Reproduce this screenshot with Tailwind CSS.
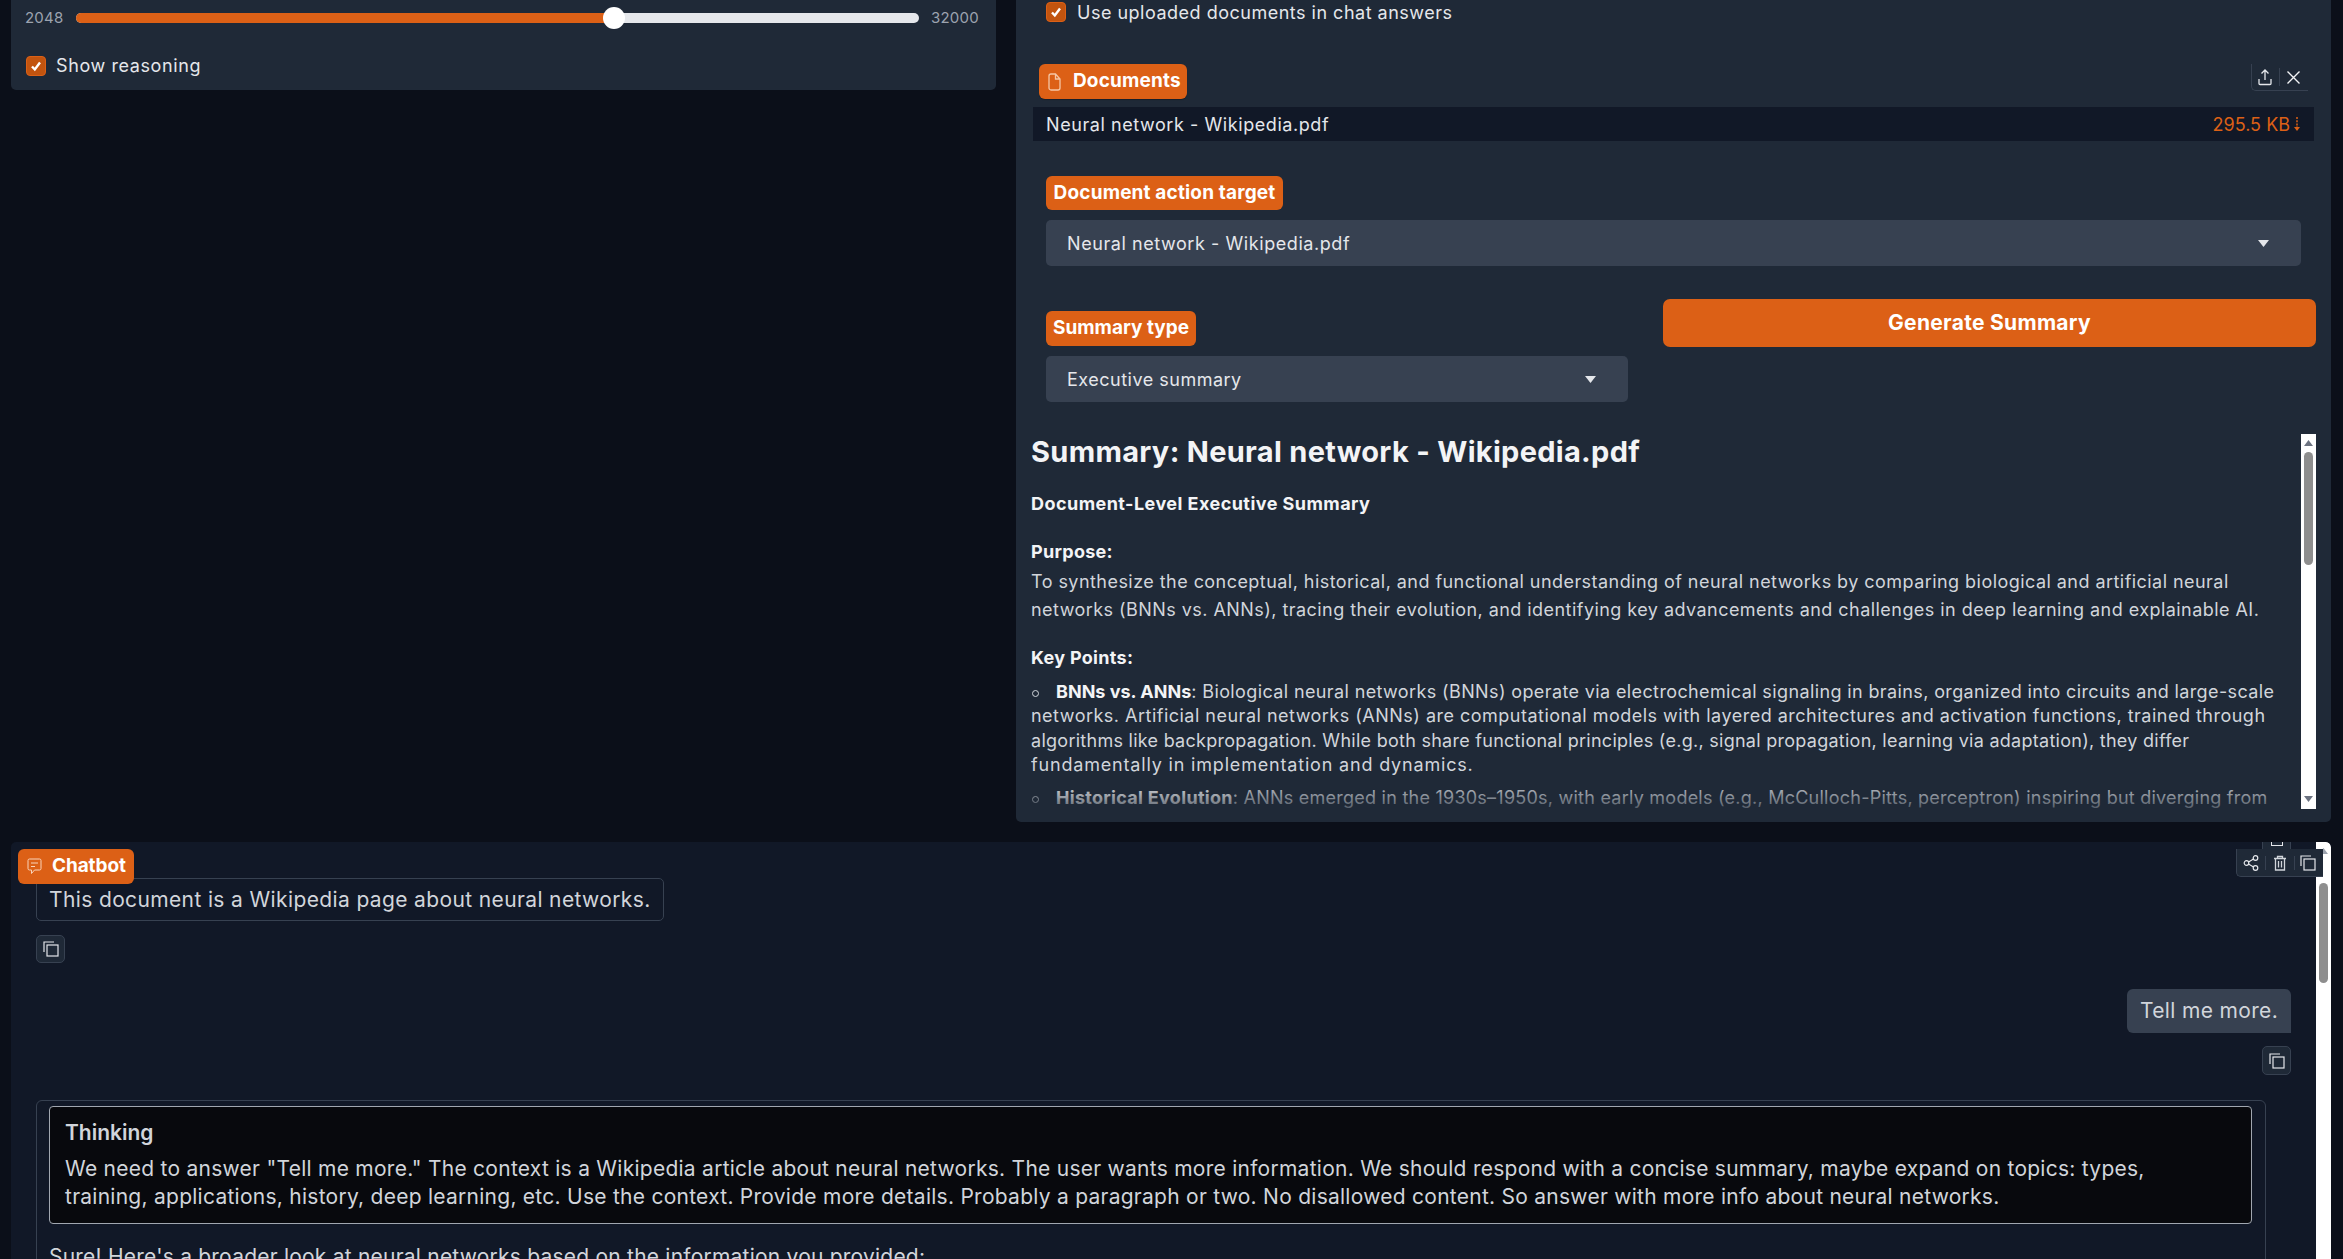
<!DOCTYPE html>
<html lang="en">
<head>
<meta charset="utf-8">
<title>Document chat</title>
<script src="https://cdn.jsdelivr.net/npm/@tailwindcss/browser@4"></script>
</head>
<body class="bg-[#0b0f19] font-['Inter',sans-serif] text-[#e5e7eb] h-[1259px] w-[2343px] overflow-hidden">
<div class="flex items-start pl-[11px] h-[842px]">
  <!-- left panel -->
  <section class="w-[985px] h-[90px] bg-[#1f2937] rounded-b-[5px] shrink-0">
    <div class="flex items-center h-[36px] pl-[14px]">
      <span class="w-[39px] text-[15px] text-[#9ca3af] tracking-[0.2px]">2048</span>
      <div class="relative ml-[12px] w-[843px] h-[10px] rounded-full bg-[#e5e7eb]">
        <div class="w-[537px] h-[10px] rounded-l-full bg-[#dc6016]"></div>
        <div class="absolute left-[527px] top-[-6px] w-[22px] h-[22px] rounded-full bg-white"></div>
      </div>
      <span class="ml-[12px] text-[15px] text-[#9ca3af] tracking-[0.2px]">32000</span>
    </div>
    <div class="flex items-center gap-[10px] mt-[20px] ml-[15px] h-[20px]">
      <span class="flex items-center justify-center w-[20px] h-[20px] rounded-[4px] bg-[#c2540f] border border-[#dc6016]">
        <svg width="14" height="14" viewBox="0 0 14 14" fill="none" stroke="#fff" stroke-width="2.4"><path d="M3 7.5l2.8 3L11 3.5"/></svg>
      </span>
      <span class="mb-[2px] text-[18px] text-[#e5e7eb] tracking-[0.6px]">Show reasoning</span>
    </div>
  </section>

  <!-- right panel -->
  <section class="ml-[20px] w-[1315px] h-[822px] bg-[#1f2937] rounded-b-[5px] shrink-0 overflow-hidden">
    <div class="flex items-center gap-[11px] ml-[30px] mt-[2px] h-[20px]">
      <span class="flex items-center justify-center w-[20px] h-[20px] rounded-[4px] bg-[#c2540f] border border-[#dc6016]">
        <svg width="14" height="14" viewBox="0 0 14 14" fill="none" stroke="#fff" stroke-width="2.4"><path d="M3 7.5l2.8 3L11 3.5"/></svg>
      </span>
      <span class="text-[18px] text-[#e5e7eb] tracking-[0.5px]">Use uploaded documents in chat answers</span>
    </div>

    <div class="ml-[17px] mt-[42px] w-[1281px]">
      <div class="flex items-start justify-between h-[43px]">
        <div class="ml-[6px] flex items-center w-[148px] h-[35px] rounded-[6px] bg-[#dc6016] pl-[9px] shadow-[0_1px_1px_rgba(0,0,0,0.25)]">
          <svg width="13" height="18" viewBox="0 0 13 18" fill="none" stroke="#f5c6a5" stroke-width="1.3"><path d="M1 3a2 2 0 0 1 2-2h4.500L12 6v9a2 2 0 0 1-2 2H3a2 2 0 0 1-2-2zM7.500 1v5H12"/></svg>
          <span class="ml-[12px] text-[19px] font-bold text-white tracking-[0.15px]">Documents</span>
        </div>
        <div class="flex items-center mr-[6px] w-[57px] h-[27px] border-l border-b border-[#374151] rounded-bl-[5px] pl-[5px]">
          <svg width="16" height="18" viewBox="0 0 16 18" fill="none" stroke="#e5e7eb" stroke-width="1.3"><path d="M8 12V2M4.500 5.500L8 2l3.500 3.500M2 11v4.500a1 1 0 0 0 1 1h10a1 1 0 0 0 1-1V11"/></svg>
          <span class="ml-[6px] mr-[6px] w-px h-[18px] bg-[#374151]"></span>
          <svg width="15" height="15" viewBox="0 0 15 15" fill="none" stroke="#f3f4f6" stroke-width="1.4"><path d="M1.500 1.500l12 12M13.500 1.500l-12 12"/></svg>
        </div>
      </div>
      <div class="flex items-center justify-between h-[34px] bg-[#111827] pl-[13px] pr-[13px]">
        <span class="text-[18px] text-[#e5e7eb] tracking-[0.57px]">Neural network - Wikipedia.pdf</span>
        <span class="flex items-center text-[18px] text-[#dc6016]">295.5 KB
          <svg class="ml-[3px]" width="8" height="15" viewBox="0 0 8 15" fill="none" stroke="#dc6016" stroke-width="1.5"><path d="M4 0v11" stroke-dasharray="2 1.2"/><path d="M1 10h6l-3 4z" fill="#dc6016" stroke="none"/></svg>
        </span>
      </div>
    </div>

    <div class="ml-[30px] mt-[35px] flex items-center justify-center w-[237px] h-[34px] rounded-[6px] bg-[#dc6016] text-[19px] font-bold text-white whitespace-nowrap tracking-[0.16px]">Document action target</div>
    <div class="ml-[30px] mt-[10px] w-[1255px] h-[46px] flex items-center justify-between rounded-[5px] bg-[#374151] pl-[21px] pr-[32px]">
      <span class="text-[18px] text-[#e5e7eb] tracking-[0.57px]">Neural network - Wikipedia.pdf</span>
      <svg width="11" height="7" viewBox="0 0 11 7"><path d="M0 0h11L5.500 7z" fill="#e5e7eb"/></svg>
    </div>

    <div class="flex items-start mt-[33px]">
      <div class="ml-[30px] w-[582px] pt-[12px]">
        <div class="flex items-center justify-center w-[150px] h-[35px] rounded-[6px] bg-[#dc6016] text-[19px] font-bold text-white">Summary type</div>
        <div class="mt-[10px] h-[46px] flex items-center justify-between rounded-[5px] bg-[#374151] pl-[21px] pr-[32px]">
          <span class="text-[18px] text-[#e5e7eb] tracking-[0.5px]">Executive summary</span>
          <svg width="11" height="7" viewBox="0 0 11 7"><path d="M0 0h11L5.500 7z" fill="#e5e7eb"/></svg>
        </div>
      </div>
      <button class="ml-[35px] w-[653px] h-[48px] rounded-[7px] bg-[#dc6016] text-[21px] font-bold text-white tracking-[0.3px]">Generate Summary</button>
    </div>

    <div class="relative ml-[15px] mt-[32px] w-[1285px] h-[375px] overflow-hidden">
      <div class="w-[1270px] whitespace-nowrap text-[18px] text-[#d1d5db]">
        <h2 class="text-[29px] leading-[36px] font-bold text-[#f3f4f6] tracking-[0.3px]">Summary: Neural network - Wikipedia.pdf</h2>
        <p class="mt-[22px] h-[24px] leading-[24px] font-bold text-[#f3f4f6] tracking-[0.45px]">Document-Level Executive Summary</p>
        <p class="mt-[24px] h-[24px] leading-[24px] font-bold text-[#f3f4f6] tracking-[0.3px]">Purpose:</p>
        <p class="mt-[4px] leading-[28px] tracking-[0.45px]">To synthesize the conceptual, historical, and functional understanding of neural networks by comparing biological and artificial neural<br>networks (BNNs vs. ANNs), tracing their evolution, and identifying key advancements and challenges in deep learning and explainable AI.</p>
        <p class="mt-[22px] h-[24px] leading-[24px] font-bold text-[#f3f4f6] tracking-[0.3px]">Key Points:</p>
        <ul class="mt-[10px] leading-[24.4px]">
          <li><span class="inline-block w-[7px] h-[7px] ml-[1px] mr-[17px] mb-[1px] rounded-full border border-[#d1d5db]"></span><b class="font-bold text-[#f3f4f6]">BNNs vs. ANNs</b><span class="tracking-[0.38px]">: Biological neural networks (BNNs) operate via electrochemical signaling in brains, organized into circuits and large-scale</span><br><span class="tracking-[0.49px]">networks. Artificial neural networks (ANNs) are computational models with layered architectures and activation functions, trained through</span><br><span class="tracking-[0.27px]">algorithms like backpropagation. While both share functional principles (e.g., signal propagation, learning via adaptation), they differ</span><br><span class="tracking-[0.82px]">fundamentally in implementation and dynamics.</span></li>
          <li class="mt-[8px]"><span class="inline-block w-[7px] h-[7px] ml-[1px] mr-[17px] mb-[1px] rounded-full border border-[#d1d5db]"></span><b class="font-bold text-[#f3f4f6] tracking-[0.3px]">Historical Evolution</b><span class="tracking-[0.24px]">: ANNs emerged in the 1930s–1950s, with early models (e.g., McCulloch-Pitts, perceptron) inspiring but diverging from</span></li>
        </ul>
      </div>
      <div class="absolute left-0 bottom-0 w-[1270px] h-[30px] bg-gradient-to-b from-transparent to-[#1f2937]/70"></div>
      <div class="absolute right-0 top-0 w-[15px] h-[375px] bg-white">
        <svg class="absolute left-[3px] top-[6px]" width="9" height="6" viewBox="0 0 9 6"><path d="M4.500 0L9 6H0z" fill="#6b7280"/></svg>
        <div class="absolute left-[3px] top-[18px] w-[9px] h-[113px] rounded-full bg-[#8e8e8e]"></div>
        <svg class="absolute left-[3px] bottom-[7px]" width="9" height="6" viewBox="0 0 9 6"><path d="M0 0h9L4.500 6z" fill="#6b7280"/></svg>
      </div>
    </div>
  </section>
</div>

<!-- chatbot -->
<section class="relative ml-[11px] w-[2320px] h-[417px] bg-[#111827] rounded-t-[5px] overflow-hidden">
  <div class="absolute left-[7px] top-[7px] z-10 flex items-center w-[116px] h-[35px] rounded-[6px] bg-[#dc6016] pl-[9px]">
    <svg width="15" height="17" viewBox="0 0 15 17" fill="none" stroke="#f8d3ba" stroke-width="1"><path d="M2.500 1h10A1.500 1.500 0 0 1 14 2.500v8a1.500 1.500 0 0 1-1.500 1.500H7.500L4.500 15.500V12h-2A1.500 1.500 0 0 1 1 10.500v-8A1.500 1.500 0 0 1 2.500 1zM4 5h7M4 8.500h4"/></svg>
    <span class="ml-[10px] text-[19px] font-bold text-white tracking-[-0.1px]">Chatbot</span>
  </div>

  <div class="absolute right-[8px] top-[7px] z-10 flex items-center w-[87px] h-[28px] bg-[#1f2937] rounded-bl-[5px] border-l border-b border-[#374151] pl-[6px]">
    <svg width="16" height="16" viewBox="0 0 16 16" fill="none" stroke="#e5e7eb" stroke-width="1.2"><circle cx="3.500" cy="8" r="2.300"/><circle cx="12.500" cy="3" r="2.300"/><circle cx="12.500" cy="13" r="2.300"/><path d="M5.500 6.900l5-2.800M5.500 9.100l5 2.800"/></svg>
    <span class="ml-[6px] mr-[7px] w-px h-[14px] bg-[#374151]"></span>
    <svg width="14" height="16" viewBox="0 0 14 16" fill="none" stroke="#d1d5db" stroke-width="1.300"><path d="M1 3.500h12M4.500 3.500V1.500h5v2M2.500 3.500V15h9V3.500M5.500 6v6.500M8.500 6v6.500"/></svg>
    <span class="ml-[7px] mr-[5px] w-px h-[14px] bg-[#374151]"></span>
    <svg width="16" height="16" viewBox="0 0 16 16" fill="none" stroke="#e5e7eb" stroke-width="1.200"><path d="M1 11V1h10"/><rect x="4" y="4" width="11" height="11"/></svg>
  </div>
  <div class="absolute left-[2251px] top-0 w-[29px] h-[7px] bg-[#1f2937] border-x border-[#374151]">
    <div class="mx-auto w-[12px] h-[4px] border-x border-b border-[#e5e7eb]"></div>
  </div>

  <div class="absolute right-0 top-0 w-[15px] h-[417px] bg-white rounded-tr-[5px]">
    <svg class="absolute left-[3px] top-[6px]" width="9" height="6" viewBox="0 0 9 6"><path d="M4.500 0L9 6H0z" fill="#9ca3af"/></svg>
    <div class="absolute left-[3px] top-[41px] w-[9px] h-[100px] rounded-full bg-[#8e8e8e]"></div>
  </div>

  <div class="ml-[25px] w-[2230px] pt-[36px]">
    <div class="inline-flex items-center h-[43px] border border-[#374151] rounded-[5px] pl-[12px] pr-[12px] text-[21px] text-[#d1d5db] tracking-[0.37px]">This document is a Wikipedia page about neural networks.</div>
    <div class="mt-[14px] flex items-center justify-center w-[29px] h-[28px] bg-[#1f2937] border border-[#374151] rounded-[5px]">
      <svg width="16" height="16" viewBox="0 0 16 16" fill="none" stroke="#e5e7eb" stroke-width="1.200"><path d="M1 11V1h10"/><rect x="4" y="4" width="11" height="11"/></svg>
    </div>

    <div class="flex flex-col items-end mt-[26px] mr-[-25px]">
      <div class="flex items-center h-[44px] w-[164px] justify-center bg-[#374151] rounded-l-[6px] rounded-tr-[6px] text-[21px] text-[#d1d5db] tracking-[0.35px]">Tell me more.</div>
      <div class="mt-[13px] flex items-center justify-center w-[29px] h-[29px] bg-[#1f2937] border border-[#374151] rounded-[5px]">
        <svg width="16" height="16" viewBox="0 0 16 16" fill="none" stroke="#e5e7eb" stroke-width="1.200"><path d="M1 11V1h10"/><rect x="4" y="4" width="11" height="11"/></svg>
      </div>
    </div>

    <div class="mt-[25px] border border-[#374151] rounded-t-[6px] pt-[5px] pl-[12px] pr-[13px] h-[200px] whitespace-nowrap">
      <div class="h-[118px] bg-[#08090d] border border-[#a1a7b0] rounded-[4px] pl-[15px] pt-[13px]">
        <p class="h-[26px] leading-[26px] text-[21px] font-semibold text-[#d1d5db]">Thinking</p>
        <p class="mt-[9px] text-[21px] leading-[28px] text-[#d1d5db] tracking-[0.26px]">We need to answer "Tell me more." The context is a Wikipedia article about neural networks. The user wants more information. We should respond with a concise summary, maybe expand on topics: types,<br>training, applications, history, deep learning, etc. Use the context. Provide more details. Probably a paragraph or two. No disallowed content. So answer with more info about neural networks.</p>
      </div>
      <p class="mt-[19px] text-[21px] leading-[28px] text-[#d1d5db] tracking-[0.22px]">Sure! Here's a broader look at neural networks based on the information you provided:</p>
    </div>
  </div>
</section>
</body>
</html>
